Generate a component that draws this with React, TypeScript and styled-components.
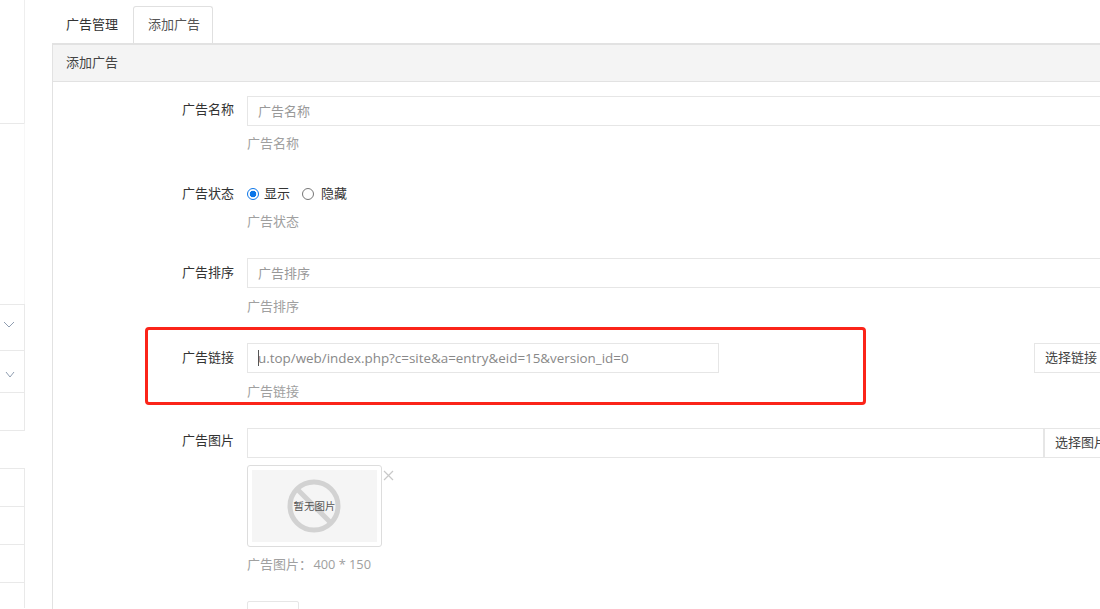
import React from "react";
import styled, { createGlobalStyle } from "styled-components";

const Global = createGlobalStyle`
  html, body { margin: 0; padding: 0; height: 100%; overflow: hidden; background: #fff; }
  body { font-family: "Open Sans", "Noto Sans CJK SC", sans-serif; font-size: 13px; color: #333; }
`;

const Page = styled.div`
  display: flex;
  height: 609px;
  width: 1100px;
  overflow: hidden;
`;

const Rail = styled.aside`
  width: 25px;
  height: 609px;
  flex: none;
  display: flex;
  flex-direction: column;
`;

const RailRow = styled.div<{ $h: number; $gap?: number; $top?: boolean; $edge?: string; $pt?: number; $pr?: number }>`
  height: ${(p) => p.$h}px;
  margin-top: ${(p) => p.$gap ?? 0}px;
  box-sizing: border-box;
  border-top: ${(p) => (p.$top === false ? "0" : "1px solid #e9e9e9")};
  border-right: 1px solid ${(p) => p.$edge ?? "#e9e9e9"};
  display: flex;
  align-items: flex-start;
  justify-content: flex-end;
  padding-top: ${(p) => p.$pt ?? 0}px;
  padding-right: ${(p) => p.$pr ?? 9}px;
  color: #8f9db0;
  flex: none;
`;

const Main = styled.main`
  flex: 1;
  min-width: 0;
  padding: 6px 0 0 27px;
`;

const Tabs = styled.nav`
  display: flex;
  height: 37px;
  width: 1100px;
`;

const Tab = styled.div<{ $active?: boolean }>`
  box-sizing: border-box;
  height: 37px;
  padding: 0 14px 3px ${(p) => (p.$active ? 14 : 13)}px;
  width: ${(p) => (p.$active ? 80 : 81)}px;
  display: flex;
  align-items: center;
  white-space: nowrap;
  font-size: 13px;
  color: ${(p) => (p.$active ? "#555" : "#333")};
  background: #fff;
  border: 1px solid ${(p) => (p.$active ? "#e0e0e0" : "transparent")};
  border-bottom: 0;
  border-radius: 3px 3px 0 0;
`;

const Panel = styled.section`
  width: 1100px;
  box-sizing: border-box;
  border: 1px solid #e2e2e2;
  border-top: 2px solid #e2e2e2;
  height: 600px;
`;

const PanelHeading = styled.header`
  height: 32px;
  background: #f4f4f4;
  border-bottom: 1px solid #e2e2e2;
  padding: 0 0 4px 13px;
  display: flex;
  align-items: center;
  font-size: 13px;
  color: #444;
`;

const Body = styled.div`
  padding-top: 14px;
  display: flex;
  flex-direction: column;
  position: relative;
`;

const Group = styled.div<{ $h: number }>`
  display: flex;
  height: ${(p) => p.$h}px;
  flex: none;
`;

const Label = styled.label<{ $pt?: number }>`
  width: 181px;
  flex: none;
  box-sizing: border-box;
  text-align: right;
  padding-top: ${(p) => p.$pt ?? 5}px;
  font-size: 13px;
  line-height: 18px;
  color: #333;
`;

const Field = styled.div`
  margin-left: 13px;
  width: 850px;
  flex: none;
`;

const TextInput = styled.input<{ $w?: number; $size?: number }>`
  display: block;
  box-sizing: border-box;
  width: ${(p) => p.$w ?? 900}px;
  height: 30px;
  border: 1px solid #e6e6e6;
  padding: 0 10px 1px;
  font-family: inherit;
  font-size: ${(p) => p.$size ?? 13}px;
  color: #888;
  outline: none;
  background: #fff;
  &::placeholder { color: #999; opacity: 1; }
`;

const Help = styled.div<{ $mt?: number }>`
  margin-top: ${(p) => p.$mt ?? 8}px;
  font-size: 13px;
  line-height: 18px;
  color: #a0a0a0;
`;

const HelpSize = styled.span`
  margin-left: -2px;
  font-size: 12.8px;
`;

const RadioRow = styled.div`
  display: flex;
  align-items: center;
  height: 30px;
  margin-top: -4px;
  font-size: 13px;
  color: #333;
`;

const RadioDot = styled.span<{ $on?: boolean }>`
  width: 12px;
  height: 12px;
  margin-top: 4px;
  box-sizing: border-box;
  border-radius: 50%;
  margin-right: ${(p) => (p.$on ? 5 : 7)}px;
  border: 1px solid ${(p) => (p.$on ? "#0a75e8" : "#767676")};
  background: ${(p) => (p.$on ? "radial-gradient(circle, #0a75e8 3px, #fff 3.6px)" : "#fff")};
`;

const RadioLabel = styled.span`
  margin-right: 12px;
`;

const LinkRow = styled.div`
  display: flex;
  width: 900px;
  align-items: flex-start;
`;

const InputWrap = styled.div`
  position: relative;
  flex: none;
`;

const Caret = styled.span`
  position: absolute;
  left: 11px;
  top: 7px;
  width: 1px;
  height: 16px;
  background: #555;
`;

const SideButton = styled.div<{ $ml: number }>`
  box-sizing: border-box;
  flex: none;
  margin-left: ${(p) => p.$ml}px;
  height: 30px;
  width: 90px;
  border: 1px solid #e6e6e6;
  display: flex;
  align-items: center;
  padding: 0 0 3px 10px;
  font-size: 13px;
  color: #444;
  background: #fff;
`;

const ImageInput = styled(TextInput)`
  width: 797px;
`;

const Thumb = styled.div`
  position: relative;
  margin-top: 7px;
  box-sizing: border-box;
  width: 135px;
  height: 82px;
  border: 1px solid #ddd;
  border-radius: 3px;
  padding: 4px;
`;

const ThumbInner = styled.div`
  width: 125px;
  height: 72px;
  background: #f5f5f5;
  display: flex;
  align-items: center;
  justify-content: center;
  position: relative;
`;

const ThumbText = styled.span`
  position: absolute;
  left: 0;
  right: 0;
  text-align: center;
  font-size: 10.5px;
  line-height: 14px;
  color: #555;
`;

const Close = styled.svg`
  position: absolute;
  right: -13px;
  top: 4px;
`;

const SmallBox = styled.div`
  margin-left: 194px;
  width: 52px;
  height: 30px;
  box-sizing: border-box;
  border: 1px solid #e6e6e6;
  border-radius: 2px;
  flex: none;
`;

const Highlight = styled.div`
  position: absolute;
  left: 92px;
  top: 245px;
  width: 721px;
  height: 78px;
  box-sizing: border-box;
  border: 3px solid #fb2419;
  border-radius: 4px;
  pointer-events: none;
`;

const Chevron = ({ w }: { w: number }) => (
  <svg width={w} height="7" viewBox={`0 0 ${w} 7`} fill="none" stroke="currentColor" strokeWidth="1">
    <path d={`M1 1l${(w - 2) / 2} 5 ${(w - 2) / 2}-5`} />
  </svg>
);

export default function App() {
  return (
    <Page>
      <Global />
      <Rail>
        <RailRow $h={123} $top={false} $edge="#eeeeee" />
        <RailRow $h={181} $edge="#f7f7f7" />
        <RailRow $h={46} $pt={16} $pr={9}><Chevron w={12} /></RailRow>
        <RailRow $h={42} $pt={20} $pr={9}><Chevron w={10} /></RailRow>
        <RailRow $h={38} />
        <RailRow $h={1} />
        <RailRow $h={38} $gap={37} />
        <RailRow $h={38} />
        <RailRow $h={38} />
        <RailRow $h={26} />
      </Rail>
      <Main>
        <Tabs>
          <Tab>广告管理</Tab>
          <Tab $active>添加广告</Tab>
        </Tabs>
        <Panel>
          <PanelHeading>添加广告</PanelHeading>
          <Body>
            <Group $h={85}>
              <Label $pt={4}>广告名称</Label>
              <Field>
                <TextInput placeholder="广告名称" />
                <Help>广告名称</Help>
              </Field>
            </Group>
            <Group $h={77}>
              <Label $pt={3}>广告状态</Label>
              <Field>
                <RadioRow>
                  <RadioDot $on />
                  <RadioLabel>显示</RadioLabel>
                  <RadioDot />
                  <RadioLabel>隐藏</RadioLabel>
                </RadioRow>
                <Help $mt={5}>广告状态</Help>
              </Field>
            </Group>
            <Group $h={85}>
              <Label>广告排序</Label>
              <Field>
                <TextInput placeholder="广告排序" />
                <Help $mt={9}>广告排序</Help>
              </Field>
            </Group>
            <Group $h={85}>
              <Label>广告链接</Label>
              <Field>
                <LinkRow>
                  <InputWrap>
                    <TextInput $w={472} $size={13.4} defaultValue="u.top/web/index.php?c=site&a=entry&eid=15&version_id=0" />
                    <Caret />
                  </InputWrap>
                  <SideButton $ml={315}>选择链接</SideButton>
                </LinkRow>
                <Help $mt={9}>广告链接</Help>
              </Field>
            </Group>
            <Group $h={173}>
              <Label $pt={3}>广告图片</Label>
              <Field>
                <LinkRow>
                  <ImageInput readOnly />
                  <SideButton $ml={0}>选择图片</SideButton>
                </LinkRow>
                <Thumb>
                  <ThumbInner>
                    <svg width="54" height="54" viewBox="0 0 54 54" fill="none" stroke="#d2d2d2" strokeWidth="5" style={{ marginRight: 2 }}>
                      <circle cx="27" cy="27" r="24" />
                      <path d="M10 10l34 34" />
                    </svg>
                    <ThumbText>暂无图片</ThumbText>
                  </ThumbInner>
                  <Close width="11" height="11" viewBox="0 0 11 11" stroke="#c8c8c8" strokeWidth="1.2" fill="none">
                    <path d="M1 1l9 9M10 1l-9 9" />
                  </Close>
                </Thumb>
                <Help>广告图片： <HelpSize>400 * 150</HelpSize></Help>
              </Field>
            </Group>
            <SmallBox />
            <Highlight />
          </Body>
        </Panel>
      </Main>
    </Page>
  );
}
